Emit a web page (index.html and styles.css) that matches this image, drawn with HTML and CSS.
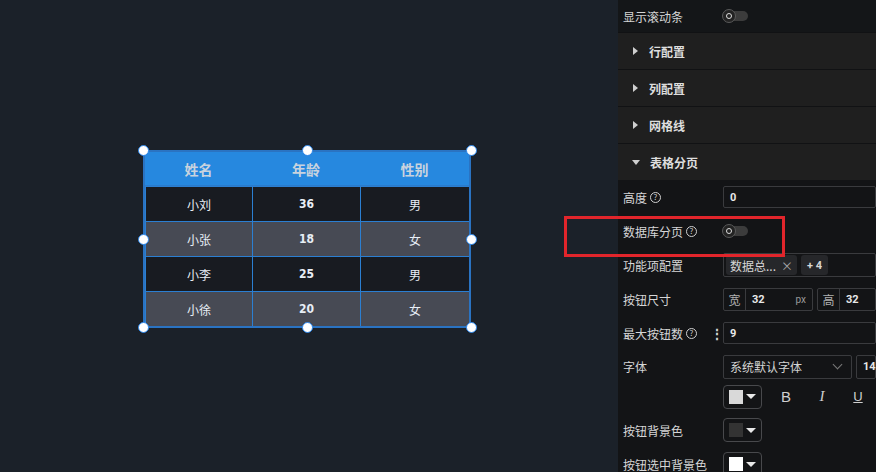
FILE: index.html
```html
<!DOCTYPE html>
<html lang="zh">
<head>
<meta charset="utf-8">
<link rel="stylesheet" href="styles.css">
</head>
<body>
<div class="app">
  <div class="canvas">
    <div class="widget">
      <div class="grid">
        <div class="th">姓名</div><div class="th">年龄</div><div class="th">性别</div>
        <div class="td a">小刘</div><div class="td a num">36</div><div class="td a">男</div>
        <div class="td b">小张</div><div class="td b num">18</div><div class="td b">女</div>
        <div class="td a">小李</div><div class="td a num">25</div><div class="td a">男</div>
        <div class="td b">小徐</div><div class="td b num">20</div><div class="td b">女</div>
      </div>
      <span class="h h-tl"></span><span class="h h-tc"></span><span class="h h-tr"></span>
      <span class="h h-ml"></span><span class="h h-mr"></span>
      <span class="h h-bl"></span><span class="h h-bc"></span><span class="h h-br"></span>
    </div>
  </div>
  <div class="panel">
    <div class="row top-row">
      <div class="label">显示滚动条</div>
      <div class="ctrl"><span class="toggle"><span class="knob"></span></span></div>
    </div>
    <div class="sec"><span class="tri-r"></span>行配置</div>
    <div class="sec"><span class="tri-r"></span>列配置</div>
    <div class="sec"><span class="tri-r"></span>网格线</div>
    <div class="sec"><span class="tri-d"></span>表格分页</div>
    <div class="body">
      <div class="row r34">
        <div class="label">高度<span class="q">?</span></div>
        <div class="ctrl"><div class="input h22"><span class="val">0</span></div></div>
      </div>
      <div class="row r34">
        <div class="label">数据库分页<span class="q">?</span></div>
        <div class="ctrl"><span class="toggle"><span class="knob"></span></span></div>
      </div>
      <div class="row r34">
        <div class="label">功能项配置</div>
        <div class="ctrl"><div class="input h24 tags"><span class="tag">数据总...<span class="x">×</span></span><span class="tag plus">+ 4</span></div></div>
      </div>
      <div class="row r34">
        <div class="label">按钮尺寸</div>
        <div class="ctrl pair">
          <div class="input h23 grp w90"><span class="addon">宽</span><span class="val">32</span><span class="unit">px</span></div>
          <div class="input h23 grp rest"><span class="addon">高</span><span class="val">32</span></div>
        </div>
      </div>
      <div class="row r34">
        <div class="label">最大按钮数<span class="q">?</span><span class="dots">⋮</span></div>
        <div class="ctrl"><div class="input h22"><span class="val">9</span></div></div>
      </div>
      <div class="row r33">
        <div class="label">字体</div>
        <div class="ctrl pair">
          <div class="input h24 sel"><span class="seltext">系统默认字体</span><span class="chev"></span></div>
          <div class="input h24 rest"><span class="val">14</span></div>
        </div>
      </div>
      <div class="row r27">
        <div class="label"></div>
        <div class="ctrl fmt">
          <span class="cp"><span class="sw sw-light"></span><span class="dt"></span></span>
          <span class="fb">B</span><span class="fi">I</span><span class="fu">U</span>
        </div>
      </div>
      <div class="row r40">
        <div class="label">按钮背景色</div>
        <div class="ctrl"><span class="cp"><span class="sw sw-dark"></span><span class="dt"></span></span></div>
      </div>
      <div class="row r28">
        <div class="label">按钮选中背景色</div>
        <div class="ctrl"><span class="cp"><span class="sw sw-white"></span><span class="dt"></span></span></div>
      </div>
    </div>
  </div>
  <div class="redbox"></div>
</div>
</body>
</html>
```

FILE: styles.css
```css
* { box-sizing: border-box; }
html, body { margin: 0; padding: 0; }
body {
  width: 876px; height: 472px; overflow: hidden;
  font-family: "Noto Sans CJK SC", "Noto Sans", sans-serif;
  font-size: 12px;
  background: #1b2129;
}
.app { position: relative; display: flex; width: 876px; height: 472px; }
.canvas { width: 618px; flex: none; background: #1b2129; padding: 150px 0 0 143px; }
.widget {
  position: relative; width: 328px; height: 178px;
  border: 2px solid #2a73c2;
}
.grid {
  display: grid;
  grid-template-columns: 107px 108px 109px;
  grid-template-rows: 34px 35px 35px 35px 35px;
  height: 174px;
}
.th {
  background: #2688df; color: #c9d3de; font-weight: 700; font-size: 14px;
  display: flex; align-items: center; justify-content: center;
  border-bottom: 1px solid #2a7bcc;
}
.td {
  display: flex; align-items: center; justify-content: center;
  color: #e8eef6; font-size: 12px;
  border-top: 1px solid #2b7fd2; border-left: 1px solid #2b7fd2;
}
.td.a { background: #181b21; }
.td.b { background: #474a54; }
.td.num { font-weight: 700; font-family: "DejaVu Sans", "Liberation Sans", sans-serif; font-stretch: condensed; font-size: 12px; }
.h {
  position: absolute; width: 11px; height: 11px; border-radius: 50%;
  background: #fff; border: 1px solid #2b84e6;
}
.h-tl { left: -7px; top: -7px; }
.h-tc { left: 157px; top: -7px; }
.h-tr { left: 321px; top: -7px; }
.h-ml { left: -7px; top: 82px; }
.h-mr { left: 321px; top: 82px; }
.h-bl { left: -7px; top: 170px; }
.h-bc { left: 157px; top: 170px; }
.h-br { left: 321px; top: 170px; }

.panel { flex: 1; background: #141518; display: flex; flex-direction: column; overflow: hidden; }
.panel > * { flex: none; }
.row { display: flex; align-items: center; padding-left: 5px; flex: none; }
.top-row { height: 32px; background: #141618; }
.label { width: 100px; flex: none; color: #d6d6d6; display: flex; align-items: center; white-space: nowrap; position: relative; }
.ctrl { flex: 1; display: flex; align-items: center; min-width: 0; }
.sec {
  height: 37px; background: #1f1f1f; border-top: 1px solid #111214;
  display: flex; align-items: center; padding-left: 14px;
  color: #dedede; font-weight: 700; font-size: 12px;
}
.tri-r { width: 0; height: 0; border-left: 5px solid #cfcfcf; border-top: 4px solid transparent; border-bottom: 4px solid transparent; margin-right: 11px; margin-left: 1px; }
.tri-d { width: 0; height: 0; border-top: 5px solid #cfcfcf; border-left: 4px solid transparent; border-right: 4px solid transparent; margin-right: 10px; }
.body { background: #131416; }
.r34 { height: 34px; }
.r33 { height: 33px; }
.r27 { height: 27px; }
.r40 { height: 40px; }
.r28 { height: 28px; }
.q {
  display: inline-flex; align-items: center; justify-content: center;
  width: 11px; height: 11px; border: 1px solid #cfcfcf; border-radius: 50%;
  font-size: 8px; color: #cfcfcf; margin-left: 3px; line-height: 1;
}
.dots { position: absolute; left: 87px; top: 50%; transform: translateY(-50%); color: #cfcfcf; font-size: 14px; font-weight: 700; }
.toggle {
  position: relative; width: 25px; height: 10px; border-radius: 5px; background: #3c3c3c; display: inline-block; flex: none;
}
.knob {
  position: absolute; left: -1px; top: -2px; width: 14px; height: 14px; border-radius: 50%;
  background: #232323; border: 1px solid #5a5a5a;
}
.knob::after {
  content: ""; position: absolute; left: 3px; top: 3px; width: 6px; height: 6px; border-radius: 50%;
  border: 1.5px solid #dcdcdc; box-sizing: border-box;
}
.input {
  border: 1px solid #3a3b3e; border-radius: 2px; background: #131416;
  display: flex; align-items: center; flex: 1; min-width: 0; color: #e8e8e8;
}
.h22 { height: 22px; }
.h23 { height: 23px; }
.h24 { height: 24px; }
.val { padding-left: 6px; font-weight: 700; font-family: "Roboto", "Liberation Sans", sans-serif; font-size: 11px; }
.tags { padding-left: 2px; gap: 4px; }
.tag { height: 20px; background: #26272a; border-radius: 3px; display: inline-flex; align-items: center; padding: 0 4px; color: #d6d6d6; font-size: 12px; }
.tag .x { color: #a8a8a8; margin-left: 5px; font-size: 12px; }
.tag.plus { padding: 0 6px; font-weight: 700; font-family: "Roboto", sans-serif; font-size: 11px; }
.pair { gap: 4px; }
.grp { flex: none; }
.w90 { width: 90px; }
.rest { flex: 1; }
.addon { width: 22px; height: 100%; border-right: 1px solid #3a3b3e; display: flex; align-items: center; justify-content: center; color: #b0b0b0; font-size: 12px; flex: none; }
.unit { margin-left: auto; padding-right: 6px; color: #9a9a9a; font-size: 10px; font-family: "Roboto", sans-serif; }
.sel { flex: none; width: 129px; justify-content: space-between; padding: 0 10px 0 6px; }
.seltext { color: #d4d4d4; font-size: 12px; }
.chev { width: 7px; height: 7px; border-right: 1px solid #7a7a7a; border-bottom: 1px solid #7a7a7a; transform: rotate(45deg); margin-top: -4px; }
.cp {
  width: 39px; height: 24px; border: 1px solid #48494c; border-radius: 4px;
  display: inline-flex; align-items: center; padding-left: 5px; flex: none;
}
.sw { width: 14px; height: 14px; }
.sw-light { background: #d9d9d9; }
.sw-dark { background: #333333; }
.sw-white { background: #ffffff; }
.dt { width: 0; height: 0; border-top: 5px solid #e8e8e8; border-left: 5px solid transparent; border-right: 5px solid transparent; margin-left: 3px; }
.fb, .fi, .fu { color: #cfcfcf; font-family: "Liberation Sans", sans-serif; font-size: 15px; width: 36px; text-align: center; }
.fb { margin-left: 6px; }
.fi { font-style: italic; font-family: "Liberation Serif", serif; }
.fu { text-decoration: underline; font-size: 13px; }
.redbox {
  position: absolute; left: 564px; top: 216px; width: 221px; height: 41px;
  border: 3px solid #e2252b;
}
```
